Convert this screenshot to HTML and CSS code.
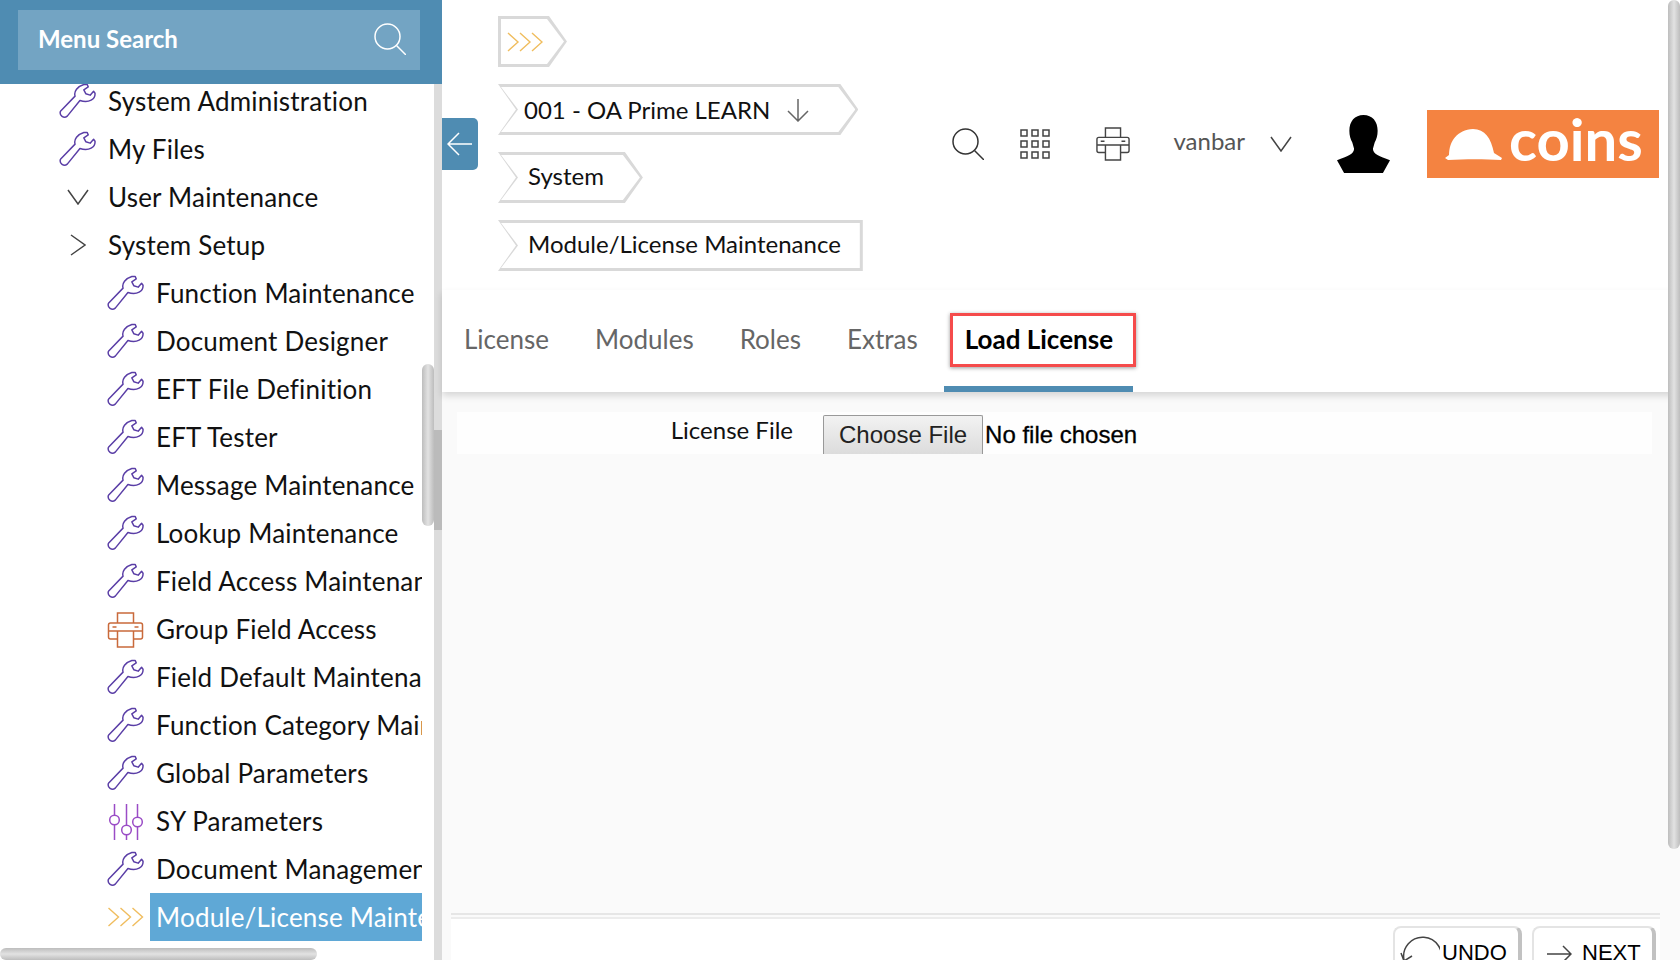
FILE: index.html
```html
<!DOCTYPE html>
<html lang="en">
<head>
  <meta charset="UTF-8">
  <title>Module/License Maintenance</title>
  <link rel="stylesheet" href="styles.css">
</head>
<body>
  <svg class="defs" width="0" height="0">
    <symbol id="i-wrench" viewBox="0 0 38 36">
      <path d="M1.5 28.5 L16.5 13 C15 8 19 3 25.5 1 L29 1 L30 3.5 L25.5 6.5 L27.5 10.5 L32 12 L35.5 8 L37 10 C37.5 16 31 20.5 21.5 17.5 L8.5 33.5 C5 36.5 0 33 1.5 28.5 Z" fill="none" stroke="currentColor" stroke-width="1.5" stroke-linejoin="round"/>
    </symbol>
    <symbol id="i-printer" viewBox="0 0 36 36">
      <path d="M10 11 V1 H26 V11 M10 11 H3 Q1 11 1 13 V25 Q1 27 3 27 H10 M26 27 H33 Q35 27 35 25 V13 Q35 11 33 11 H26 M1 19 H35 M10 11 H26 M10 19 V35 H26 V19 M5 15 H9 M27 15 H31" fill="none" stroke="currentColor" stroke-width="1.5"/>
    </symbol>
    <symbol id="i-sliders" viewBox="0 0 36 36">
      <path d="M6 0 V11 M6 21 V36 M18 0 V21 M18 31 V36 M29 0 V13 M29 23 V36" fill="none" stroke="currentColor" stroke-width="1.5"/>
      <circle cx="6" cy="16" r="4.8" fill="none" stroke="currentColor" stroke-width="1.5"/>
      <circle cx="18" cy="26" r="4.8" fill="none" stroke="currentColor" stroke-width="1.5"/>
      <circle cx="29" cy="18" r="4.8" fill="none" stroke="currentColor" stroke-width="1.5"/>
    </symbol>
    <symbol id="i-triple" viewBox="0 0 36 20">
      <path d="M1 1 L11 10 L1 19 M13 1 L23 10 L13 19 M25 1 L35 10 L25 19" fill="none" stroke="currentColor" stroke-width="1.4"/>
    </symbol>
    <symbol id="i-search" viewBox="0 0 32 32">
      <circle cx="13.5" cy="13.5" r="12.5" fill="none" stroke="currentColor" stroke-width="1.5"/>
      <path d="M22.5 22.5 L32 32" fill="none" stroke="currentColor" stroke-width="1.5"/>
    </symbol>
    <symbol id="i-down" viewBox="0 0 22 16">
      <path d="M1 1 L11 15 L21 1" fill="none" stroke="currentColor" stroke-width="1.5"/>
    </symbol>
    <symbol id="i-right" viewBox="0 0 16 22">
      <path d="M1 1 L15 11 L1 21" fill="none" stroke="currentColor" stroke-width="1.5"/>
    </symbol>
  </svg>

  <aside class="sidebar">
    <div class="menu-head">
      <div class="menu-search">
        <span class="menu-search-text">Menu Search</span>
        <svg class="menu-search-icon"><use href="#i-search"/></svg>
      </div>
    </div>
    <ul class="menu">
      <li class="row"><svg class="ico wrench"><use href="#i-wrench"/></svg><span class="label">System Administration</span></li>
      <li class="row"><svg class="ico wrench"><use href="#i-wrench"/></svg><span class="label">My Files</span></li>
      <li class="row"><span class="ico toggle"><svg class="tog-down"><use href="#i-down"/></svg></span><span class="label">User Maintenance</span></li>
      <li class="row"><span class="ico toggle"><svg class="tog-right"><use href="#i-right"/></svg></span><span class="label">System Setup</span></li>
      <li class="row sub"><svg class="ico wrench"><use href="#i-wrench"/></svg><span class="label">Function Maintenance</span></li>
      <li class="row sub"><svg class="ico wrench"><use href="#i-wrench"/></svg><span class="label">Document Designer</span></li>
      <li class="row sub"><svg class="ico wrench"><use href="#i-wrench"/></svg><span class="label">EFT File Definition</span></li>
      <li class="row sub"><svg class="ico wrench"><use href="#i-wrench"/></svg><span class="label">EFT Tester</span></li>
      <li class="row sub"><svg class="ico wrench"><use href="#i-wrench"/></svg><span class="label">Message Maintenance</span></li>
      <li class="row sub"><svg class="ico wrench"><use href="#i-wrench"/></svg><span class="label">Lookup Maintenance</span></li>
      <li class="row sub"><svg class="ico wrench"><use href="#i-wrench"/></svg><span class="label">Field Access Maintenance</span></li>
      <li class="row sub"><svg class="ico printer"><use href="#i-printer"/></svg><span class="label">Group Field Access</span></li>
      <li class="row sub"><svg class="ico wrench"><use href="#i-wrench"/></svg><span class="label">Field Default Maintenance</span></li>
      <li class="row sub"><svg class="ico wrench"><use href="#i-wrench"/></svg><span class="label">Function Category Maintenance</span></li>
      <li class="row sub"><svg class="ico wrench"><use href="#i-wrench"/></svg><span class="label">Global Parameters</span></li>
      <li class="row sub"><svg class="ico sliders"><use href="#i-sliders"/></svg><span class="label">SY Parameters</span></li>
      <li class="row sub"><svg class="ico wrench"><use href="#i-wrench"/></svg><span class="label">Document Management</span></li>
      <li class="row sub active"><svg class="ico triple"><use href="#i-triple"/></svg><span class="label">Module/License Maintenance</span></li>
    </ul>
    <div class="side-track-thumb"></div>
    <div class="side-vthumb"></div>
    <div class="side-hthumb"></div>
    <button class="collapse" type="button" aria-label="Collapse menu">
      <svg width="26" height="24" viewBox="0 0 26 24"><path d="M25 12 H2 M12 1 L1 12 L12 23" fill="none" stroke="#fff" stroke-width="1.5"/></svg>
    </button>
  </aside>

  <main class="main">
    <header class="top">
      <nav class="crumbs">
        <div class="crumb first"><div class="crumb-in"><svg class="crumb-triple"><use href="#i-triple"/></svg></div></div>
        <div class="crumb"><div class="crumb-in company">001 - OA Prime LEARN
          <svg class="crumb-down" width="22" height="24" viewBox="0 0 22 24"><path d="M11 1 V23 M1 13 L11 23 L21 13" fill="none" stroke="#666" stroke-width="1.5"/></svg>
        </div></div>
        <div class="crumb"><div class="crumb-in">System</div></div>
        <div class="crumb last"><div class="crumb-in">Module/License Maintenance</div></div>
      </nav>
      <div class="tools">
        <svg class="tool-search"><use href="#i-search"/></svg>
        <svg class="tool-grid" viewBox="0 0 30 30">
          <g fill="none" stroke="#444" stroke-width="1.5">
            <rect x="1" y="1" width="6" height="6"/><rect x="12" y="1" width="6" height="6"/><rect x="23" y="1" width="6" height="6"/>
            <rect x="1" y="12" width="6" height="6"/><rect x="12" y="12" width="6" height="6"/><rect x="23" y="12" width="6" height="6"/>
            <rect x="1" y="23" width="6" height="6"/><rect x="12" y="23" width="6" height="6"/><rect x="23" y="23" width="6" height="6"/>
          </g>
        </svg>
        <svg class="tool-print"><use href="#i-printer"/></svg>
        <span class="user">vanbar</span>
        <svg class="tool-chev"><use href="#i-down"/></svg>
        <svg class="avatar" viewBox="10 6 45 55" preserveAspectRatio="none">
          <path d="M32.5 6 C40 6 44.5 12 44.5 21 C44.5 26 43.5 29 42 32 L40.5 38 C40.5 43 46 45 55 49 L49 61 L16 61 L10 49 C19 45 24.5 43 24.5 38 L23 32 C21.5 29 20.5 26 20.5 21 C20.5 12 25 6 32.5 6Z" fill="#000"/>
        </svg>
        <div class="logo">
          <svg class="logo-hat" viewBox="0 0 57 31"><path d="M0 29 L4 26 C4 12 12 1 28 0 C40 0 46 9 49 24 L57 29 L56 31 C40 30 20 30 3 31 Z" fill="#fff"/></svg>
          <span class="logo-word">coins</span>
        </div>
      </div>
    </header>

    <div class="tabs">
      <a class="tab">License</a>
      <a class="tab">Modules</a>
      <a class="tab">Roles</a>
      <a class="tab">Extras</a>
      <a class="tab current">Load License</a>
    </div>

    <section class="content">
      <div class="form-row">
        <label class="form-label" for="license-file">License File</label>
        <input class="file" id="license-file" type="file">
      </div>
    </section>

    <div class="foot-wrap">
      <footer class="foot">
        <button class="btn undo" type="button">
          <svg class="undo-ico" width="40" height="40" viewBox="0 0 40 40"><path d="M4 24 A19 19 0 1 1 12 36 M1 17 L4 25 L12 20" fill="none" stroke="#444" stroke-width="1.5"/></svg>
          UNDO
        </button>
        <button class="btn next" type="button">
          <svg class="next-ico" width="26" height="18" viewBox="0 0 26 18"><path d="M1 9 H25 M17 1 L25 9 L17 17" fill="none" stroke="#444" stroke-width="1.5"/></svg>
          NEXT
        </button>
      </footer>
    </div>
  </main>

  <div class="page-thumb"></div>
</body>
</html>
```

FILE: styles.css
```css
* { box-sizing: border-box; }
html, body { height: 100%; }
body { margin: 0; height: 960px; overflow: hidden; display: flex; position: relative; background: #fff; color: #111; font-family: Lato, "Open Sans", sans-serif; font-size: 26px; }
.defs { position: absolute; }

/* sidebar */
.sidebar { width: 442px; flex: none; height: 960px; position: relative; border-right: 8px solid #dcdcdc; }
.menu-head { width: 442px; height: 84px; margin-right: -8px; padding: 10px 22px 14px 18px; background: #4f8cb2; position: relative; z-index: 2; }
.menu-search { height: 60px; padding: 0 14px 0 20px; display: flex; align-items: center; justify-content: space-between; background: #73a4c3; color: #fff; }
.menu-search-text { font-size: 24px; font-weight: 700; margin-top: -4px; }
.menu-search-icon { width: 32px; height: 32px; color: #fff; margin-top: -2px; }
.menu { list-style: none; margin: -7px 0 0; padding: 0; width: 422px; overflow: hidden; }
.row { height: 48px; padding-left: 59px; display: flex; align-items: center; gap: 6px; white-space: nowrap; }
.row.sub { padding-left: 107px; }
.ico { width: 37px; height: 36px; flex: none; }
.wrench { color: #5a3ea6; }
.printer { color: #c96a3b; margin-top: 2px; }
.sliders { color: #9a4cc6; margin-top: 2px; transform: translateX(1px); }
.triple { color: #f0bd5e; height: 20px; }
.toggle { display: flex; align-items: center; justify-content: center; color: #444; }
.tog-down { width: 22px; height: 16px; }
.tog-right { width: 16px; height: 22px; }
.label { flex: 1; min-width: 0; height: 100%; padding-left: 6px; line-height: 48px; letter-spacing: 0.2px; overflow: hidden; }
.active .label { background: #5fa8d6; color: #fff; }
.side-track-thumb { position: absolute; left: 434px; top: 430px; width: 8px; height: 100px; background: #bbb; }
.side-vthumb { position: absolute; left: 422px; top: 364px; width: 12px; height: 162px; border-radius: 6px; background: linear-gradient(90deg, #bdbdbd, #e2e2e2 50%, #bdbdbd); z-index: 2; }
.side-hthumb { position: absolute; left: 0; top: 948px; width: 317px; height: 12px; border-radius: 6px; background: linear-gradient(#bdbdbd, #e2e2e2 50%, #bdbdbd); z-index: 2; }
.collapse { position: absolute; left: 442px; top: 118px; width: 36px; height: 52px; padding: 0; border: 0; border-radius: 0 5px 5px 0; background: #4f8cb2; display: flex; align-items: center; justify-content: center; z-index: 3; }

/* main */
.main { flex: 1; min-width: 0; height: 960px; display: flex; flex-direction: column; }
.top { height: 290px; flex: none; padding: 16px 21px 19px 56px; display: flex; }
.crumbs { display: flex; flex-direction: column; align-items: flex-start; gap: 17px; font-size: 24px; }
.crumb { height: 51px; padding: 3px; background: #d9d9d9; clip-path: polygon(0 0, calc(100% - 18px) 0, 100% 50%, calc(100% - 18px) 100%, 0 100%, 18px 50%); }
.crumb-in { height: 45px; padding: 0 36px 4px 27px; display: flex; align-items: center; background: #fff; clip-path: polygon(0 0, calc(100% - 17px) 0, 100% 50%, calc(100% - 17px) 100%, 0 100%, 17px 50%); }
.crumb.first { clip-path: polygon(0 0, calc(100% - 18px) 0, 100% 50%, calc(100% - 18px) 100%, 0 100%); }
.crumb.first .crumb-in { width: 63px; padding: 0 0 0 6px; clip-path: polygon(0 0, calc(100% - 17px) 0, 100% 50%, calc(100% - 17px) 100%, 0 100%); }
.crumb-triple { width: 36px; height: 20px; color: #f0bd5e; }
.crumb.last { clip-path: polygon(0 0, 100% 0, 100% 100%, 0 100%, 18px 50%); }
.crumb.last .crumb-in { padding-right: 19px; clip-path: polygon(0 0, 100% 0, 100% 100%, 0 100%, 17px 50%); }
.crumb-in.company { padding-left: 23px; padding-bottom: 0; }
.crumb-down { margin-left: 17px; margin-right: 10px; }

.tools { margin-left: auto; align-self: center; display: flex; align-items: center; }
.tool-search { width: 32px; height: 32px; color: #333; }
.tool-grid { width: 30px; height: 30px; margin-left: 36px; }
.tool-print { width: 34px; height: 34px; margin-left: 46px; color: #444; }
.user { margin-left: 43px; margin-top: -6px; font-size: 24px; color: #555; }
.tool-chev { width: 22px; height: 16px; margin-left: 25px; color: #444; }
.avatar { width: 53px; height: 58px; margin-left: 45px; filter: blur(0.5px); }
.logo { width: 232px; height: 68px; margin-left: 37px; padding-left: 18px; display: flex; align-items: center; gap: 7px; background: #f48341; }
.logo-hat { width: 57px; height: 31px; margin-top: 2px; }
.logo-word { color: #fff; font-size: 58px; font-weight: 700; line-height: 1; margin-top: -9px; }

/* tabs */
.tabs { height: 102px; flex: none; padding: 0 0 4px 22px; display: flex; align-items: center; gap: 46px; background: #fff; box-shadow: 0 4px 7px rgba(0, 0, 0, 0.14); position: relative; z-index: 1; }
.tab { color: #666; position: relative; }
.tab.current { margin-left: 1px; color: #000; font-weight: 700; }
.tab.current::before { content: ""; box-sizing: border-box; position: absolute; left: -15px; right: -23px; top: -10px; height: 54px; border: 3px solid #f54b4b; box-shadow: 0 1px 4px rgba(0, 0, 0, 0.4); }
.tab.current::after { content: ""; position: absolute; left: -21px; right: -20px; top: 63px; height: 6px; background: #4f8cb2; }

/* form */
.content { flex: 1; padding-top: 20px; background: #fafafa; }
.form-row { height: 42px; margin: 0 28px 0 15px; display: flex; overflow: hidden; background: #fefefe; }
.form-label { width: 336px; text-align: right; font-size: 24px; line-height: 36px; }
.file { margin: 3px 0 0 30px; height: 39px; flex: 1; font-family: "Liberation Sans", Arial, sans-serif; font-size: 24px; color: #000; -webkit-text-stroke: 0.3px #000; }
.file::file-selector-button { height: 39px; padding: 0 15px; margin-right: 2px; border: 1px solid #999; border-bottom: 0; border-radius: 2px 2px 0 0; background: linear-gradient(#f2f2f2, #dcdcdc); font: inherit; color: #222; -webkit-text-stroke: 0; }

/* footer */
.foot-wrap { height: 47px; flex: none; padding: 0 20px 0 9px; background: #fafafa; }
.foot { height: 47px; padding: 11px 4px 0 0; border-top: 2px solid #e6e6e6; box-shadow: inset 0 2px 0 #fafafa, inset 0 4px 0 #ececec; display: flex; justify-content: flex-end; align-items: flex-start; gap: 10px; background: #fff; }
.btn { height: 56px; padding: 0 8px 2px; flex: none; display: flex; align-items: center; border: 2px solid #e4e4e4; border-right: 4px solid #c2c2c2; border-radius: 8px; background: #fff; font-family: "Liberation Sans", Arial, sans-serif; font-size: 22px; color: #000; }
.undo { width: 129px; gap: 2px; padding-left: 5px; }
.undo-ico { margin-top: 6px; }
.next { width: 124px; gap: 10px; padding-left: 12px; }
.next-ico { margin-top: 2px; }

.page-thumb { position: absolute; left: 1668px; top: 0; width: 12px; height: 849px; border-radius: 6px; background: linear-gradient(90deg, #bdbdbd, #e2e2e2 50%, #bdbdbd); z-index: 4; }
```
